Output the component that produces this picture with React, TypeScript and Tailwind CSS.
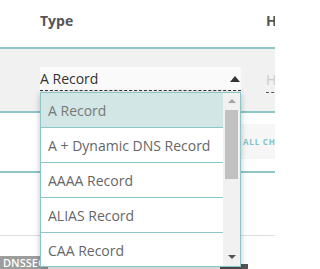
import React from 'react'

const options = [
  'A Record',
  'A + Dynamic DNS Record',
  'AAAA Record',
  'ALIAS Record',
  'CAA Record',
  'CNAME Record',
]

export default function App() {
  return (
    <div
      className="relative w-[275px] h-[269px] overflow-hidden bg-white"
      style={{ fontFamily: '"Open Sans", sans-serif' }}
    >
      {/* Header */}
      <div className="flex h-[49px] border-b-2 border-[#8cc6c6] pt-[10px]">
        <div className="w-[266px] shrink-0 pl-[40px] text-[14px] font-bold text-[#555]">Type</div>
        <div className="shrink-0 text-[14px] font-bold text-[#555]">Host</div>
      </div>

      {/* Editing row */}
      <div className="flex h-[64px] bg-[#f1f1f1] border-b-2 border-[#8cc6c6] pt-[18px]">
        <div className="shrink-0 ml-[40px] w-[201px] h-[24px] bg-[#fafafa] border-b border-dashed border-[#333] flex items-center justify-between">
          <span className="text-[14px] text-[#333] leading-none">A Record</span>
          <span className="w-0 h-0 mr-[1px] border-x-[5px] border-x-transparent border-b-[6px] border-b-[#333]" />
        </div>
        <div className="shrink-0 ml-[25px] w-[60px] h-[26px] border-b border-dashed border-[#555] flex items-center">
          <span className="text-[14px] text-[#ccc]">Host</span>
        </div>
      </div>

      {/* Row 2 */}
      <div className="flex h-[60px] border-b-2 border-[#8cc6c6] pt-[11px]">
        <div className="w-[241px] shrink-0" />
        <div className="shrink-0 h-[35px] w-[80px] bg-[#f6f6f6] flex items-center pl-[2px]">
          <span className="text-[8px] font-bold text-[#7fc3c3] whitespace-nowrap tracking-[0.8px]">ALL CHANGES</span>
        </div>
      </div>

      {/* Row 3 */}
      <div className="h-[63px] border-b border-[#ddd]" />

      {/* Row 4 */}
      <div className="pt-[20px] flex">
        <span className="shrink-0 bg-[#9d9d9d] text-white text-[11px] font-semibold px-[3px] leading-[14px]">DNSSEC</span>
        <div className="shrink-0 ml-[172px] mt-[8px] w-[28px] h-[6px] bg-[#555]" />
      </div>

      {/* Dropdown menu */}
      <div className="absolute left-[40px] top-[92px] w-[201px] h-[175px] bg-white border border-[#8cc6c6] shadow-[0_2px_6px_rgba(0,0,0,0.25)] flex overflow-hidden">
        <div className="flex-1 overflow-hidden">
          {options.map((o, i) => (
            <div
              key={o}
              className={`h-[35px] flex items-center pl-[7px] border-b border-[#8cc6c6] text-[14px] whitespace-nowrap ${
                i === 0 ? 'bg-[#d2e6e6] text-[#777]' : 'text-[#666]'
              }`}
            >
              {o}
            </div>
          ))}
        </div>
        {/* scrollbar */}
        <div className="w-[17px] shrink-0 bg-[#f1f1f1] flex flex-col items-center">
          <div className="mt-[6px] w-0 h-0 border-x-[4px] border-x-transparent border-b-[4px] border-b-[#a3a3a3]" />
          <div className="mt-[7px] w-[13px] h-[69px] bg-[#c1c1c1]" />
          <div className="flex-1" />
          <div className="mb-[7px] w-0 h-0 border-x-[4px] border-x-transparent border-t-[4px] border-t-[#505050]" />
        </div>
      </div>
    </div>
  )
}
